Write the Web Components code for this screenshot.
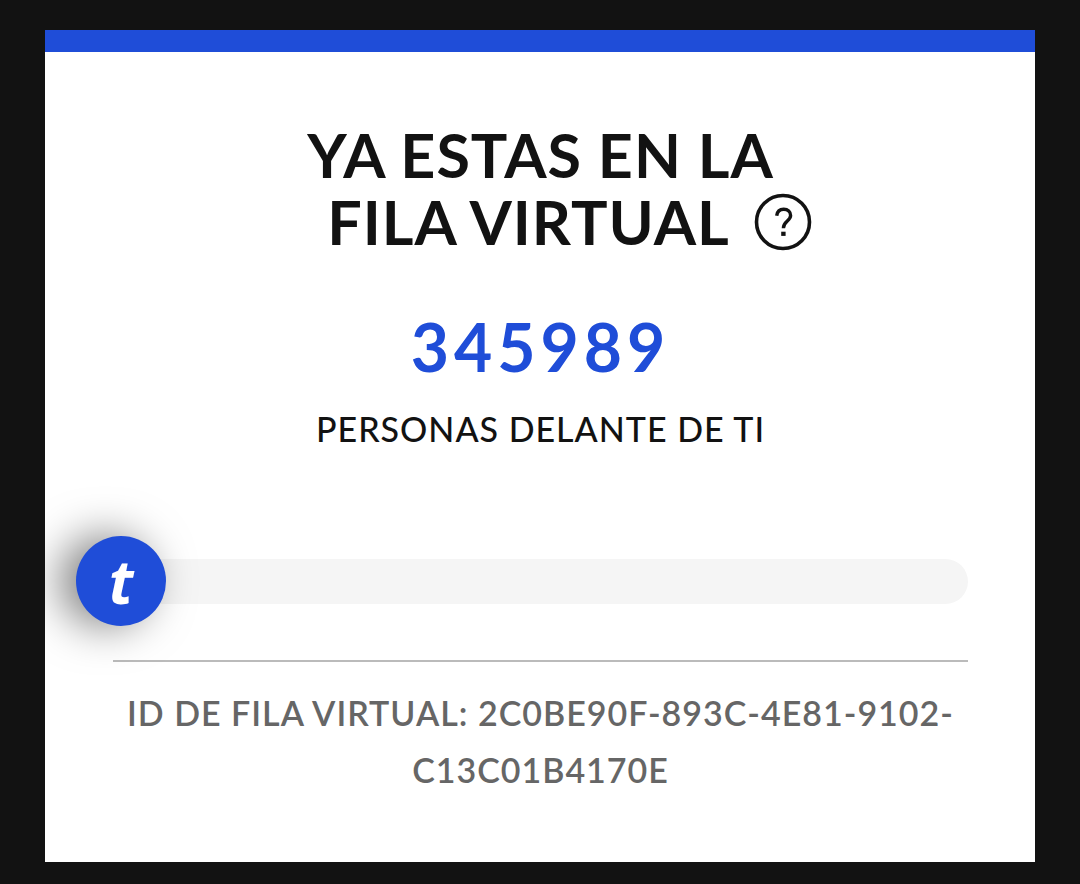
<!DOCTYPE html>
<html lang="es">
<head>
<meta charset="utf-8">
<meta name="viewport" content="width=device-width, initial-scale=1">
<title>Fila virtual</title>
<style>
body { margin: 0; background: #121212; color: #121212; font-family: Lato, "Noto Sans", sans-serif; }
</style>
</head>
<body>
<queue-card>
  <queue-title>
    <span slot="first">YA ESTAS EN LA</span>
    <span slot="second">FILA VIRTUAL</span>
  </queue-title>
  <queue-position>
    <span slot="count">345989</span>
    PERSONAS DELANTE DE TI
  </queue-position>
  <queue-progress></queue-progress>
  <queue-id>ID DE FILA VIRTUAL: 2C0BE90F-893C-4E81-9102-C13C01B4170E</queue-id>
</queue-card>

<script>
function define(name, html) {
  const template = document.createElement('template');
  template.innerHTML = html;
  customElements.define(name, class extends HTMLElement {
    constructor() {
      super();
      this.attachShadow({ mode: 'open' }).append(template.content.cloneNode(true));
    }
  });
}

define('queue-card', `
  <style>
    :host { display: block; padding: 30px 45px 20px; }
    main { display: flex; flex-direction: column; overflow: hidden;
      box-sizing: border-box; background: #fff; border-top: 22px solid #1f4dd8;
      padding: 69px 67px 64px 68px; }
  </style>
  <main><slot></slot></main>`);

define('queue-title', `
  <style>
    :host { display: block; }
    h1 { margin: 0; font-size: 61px; line-height: 67px; font-weight: 700; letter-spacing: 1px; text-align: center; }
    .first { display: block; }
    .second { display: flex; justify-content: center; align-items: center; gap: 24px; padding-left: 58px; }
    button { display: flex; width: 58px; height: 58px; padding: 0; border: 0; background: none; color: inherit; }
    svg { display: block; width: 100%; height: 100%; }
  </style>
  <h1>
    <span class="first"><slot name="first"></slot></span>
    <span class="second"><slot name="second"></slot>
      <button type="button" aria-label="Ayuda">
        <svg viewBox="0 0 58 58" fill="none" stroke="currentColor" aria-hidden="true">
          <circle cx="29" cy="29" r="26.5" stroke-width="3.6"/>
          <path d="M22.7 22.8c.5-4 3.1-6.5 7-6.5 4.2 0 6.9 2.5 6.9 6.3 0 5.4-7.2 5.8-7.2 12.6" stroke-width="3.4"/>
          <path d="M27.2 38.7h4.4v4.2h-4.4z" fill="currentColor" stroke="none"/>
        </svg>
      </button>
    </span>
  </h1>`);

define('queue-position', `
  <style>
    :host { display: block; margin-top: 52px; text-align: center; font-size: 34px; line-height: 48px; font-weight: 500; letter-spacing: 1px; }
    .count { display: block; color: #1f4dd8; font-size: 66px; line-height: 80px; font-weight: 700; letter-spacing: 5px; margin-bottom: 18px; }
    p { margin: 0; }
  </style>
  <span class="count"><slot name="count"></slot></span>
  <p><slot></slot></p>`);

define('queue-progress', `
  <style>
    :host { display: flex; align-items: center; margin-top: 83px; margin-left: -37px; }
    .marker { flex: none; display: flex; align-items: center; justify-content: center;
      width: 90px; height: 90px; border-radius: 50%; background: #1f4dd8; color: #fff;
      box-shadow: -16px 0 44px rgba(0, 0, 0, .5); z-index: 1;
      font: italic 700 60px/60px "Open Sans", "Noto Sans", sans-serif; }
    .track { flex: 1; height: 45px; margin-left: -45px; border-radius: 0 23px 23px 0; background: #f5f5f5; }
  </style>
  <div class="marker">t</div>
  <div class="track" role="progressbar" aria-label="Avance en la fila" aria-valuemin="0" aria-valuemax="100" aria-valuenow="0"></div>`);

define('queue-id', `
  <style>
    :host { display: block; margin-top: 34px; padding-top: 22px; border-top: 2px solid #bbb;
      color: #666; text-align: center; font-size: 34px; line-height: 57px; font-weight: 600; letter-spacing: 1px; }
    p { margin: 0; }
  </style>
  <p><slot></slot></p>`);
</script>
</body>
</html>
